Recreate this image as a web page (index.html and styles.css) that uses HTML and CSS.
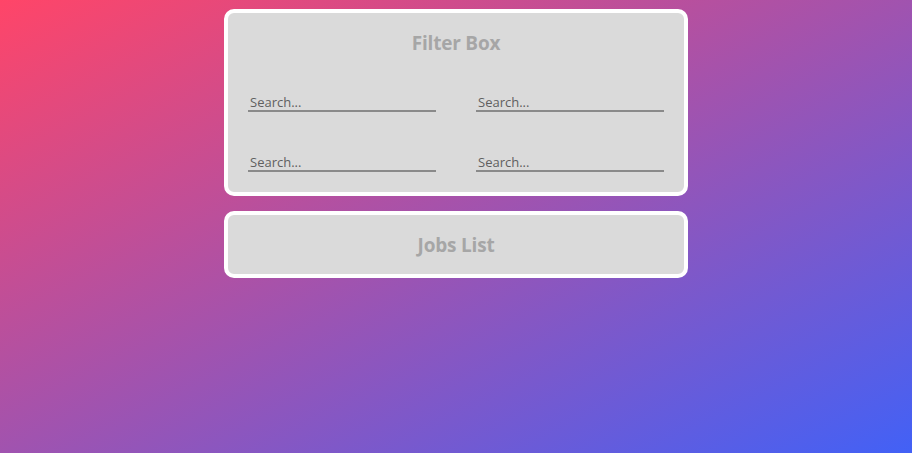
FILE: index.html
```html
<!DOCTYPE html>
<html>
<head>
<meta charset="utf-8">
<link rel="stylesheet" href="styles.css">
</head>
<body>
<div class="container">
  <section class="card filter-box">
    <h2 class="card-title">Filter Box</h2>
    <div class="filter-grid">
      <input class="search" type="text" placeholder="Search...">
      <input class="search" type="text" placeholder="Search...">
      <input class="search" type="text" placeholder="Search...">
      <input class="search" type="text" placeholder="Search...">
    </div>
  </section>
  <section class="card jobs-list">
    <h2 class="card-title">Jobs List</h2>
  </section>
</div>
</body>
</html>
```
FILE: styles.css
```css
html, body {
  margin: 0;
  height: 100%;
}
body {
  background: linear-gradient(to bottom right, #ff4568, #4261f6);
  font-family: "Open Sans", "Noto Sans", sans-serif;
}
.container {
  width: 464px;
  margin: 9px auto 0;
  display: flex;
  flex-direction: column;
  gap: 15px;
}
.card {
  background: #dadada;
  border: 4px solid #ffffff;
  border-radius: 10px;
}
.card-title {
  margin: 0;
  text-align: center;
  font-size: 19px;
  line-height: 24px;
  font-weight: 700;
  color: #a6a6a6;
  letter-spacing: -0.2px;
}
.filter-box {
  padding: 18px 20px 20px;
}
.filter-grid {
  margin-top: 39px;
  display: grid;
  grid-template-columns: 188px 188px;
  column-gap: 40px;
  row-gap: 42px;
}
.search {
  box-sizing: border-box;
  width: 188px;
  height: 18px;
  margin: 0;
  padding: 0 2px;
  border: none;
  border-bottom: 2px solid #8a8a8a;
  background: transparent;
  font-family: "Open Sans", "Noto Sans", sans-serif;
  font-size: 13px;
  color: #555;
  outline: none;
}
.search::placeholder {
  color: #606060;
}
.jobs-list {
  padding: 18px 20px 17px;
}
```
